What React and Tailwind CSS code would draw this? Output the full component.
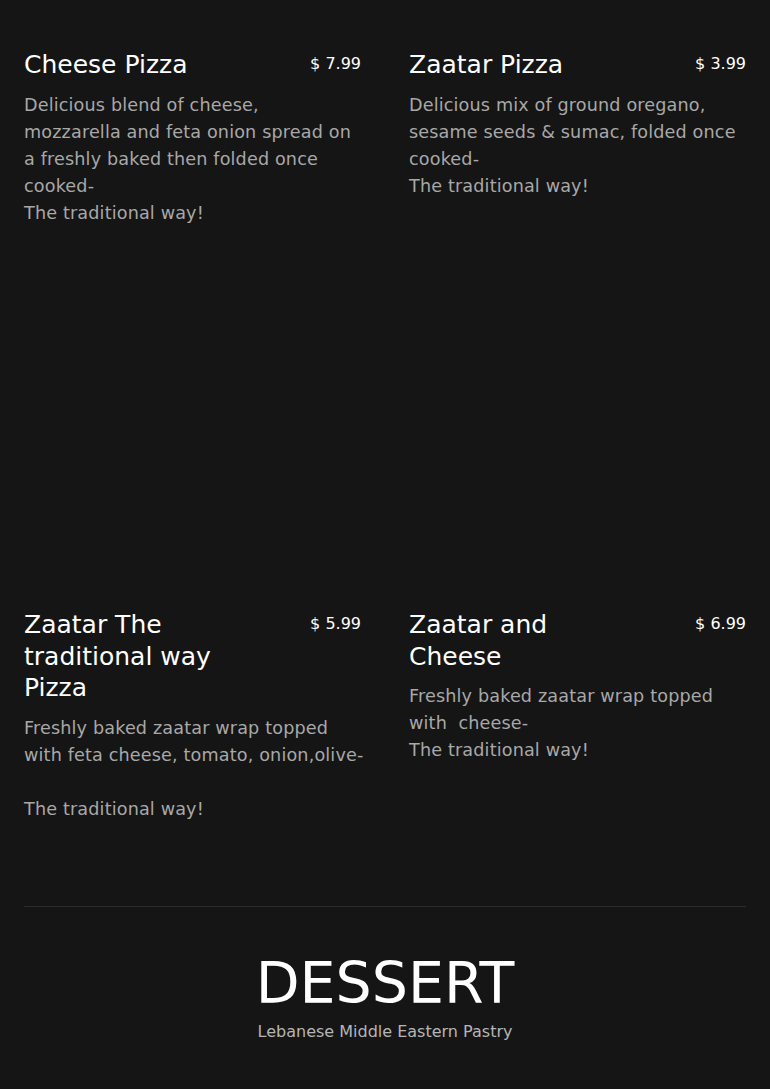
const items = [
  {
    name: "Cheese Pizza",
    price: "$ 7.99",
    desc: ["Delicious blend of cheese,", "mozzarella and feta onion spread on", "a freshly baked then folded once", "cooked-", "The traditional way!"],
  },
  {
    name: "Zaatar Pizza",
    price: "$ 3.99",
    desc: ["Delicious mix of ground oregano,", "sesame seeds & sumac, folded once", "cooked-", "The traditional way!"],
  },
  {
    name: "Zaatar The traditional way Pizza",
    price: "$ 5.99",
    desc: ["Freshly baked zaatar wrap topped", "with feta cheese, tomato, onion,olive-", "", "The traditional way!"],
  },
  {
    name: "Zaatar and Cheese",
    price: "$ 6.99",
    desc: ["Freshly baked zaatar wrap topped", "with  cheese-", "The traditional way!"],
  },
];

function MenuItem({ item, tall }) {
  return (
    <div className={tall ? "min-h-[560px]" : ""}>
      <div className="flex items-start justify-between">
        <h3 className="max-w-[225px] text-[25px] leading-[31.5px] text-white">{item.name}</h3>
        <span className="pt-[1px] text-[16px] leading-[28px] text-white">{item.price}</span>
      </div>
      <p className="mt-[11px] whitespace-pre text-[17.6px] leading-[27px] tracking-[0.15px] text-[#a8a8a8]">
        {item.desc.join("\n")}
      </p>
    </div>
  );
}

export default function App() {
  return (
    <div
      className="min-h-screen bg-[#151515] px-6 pt-[49px]"
      style={{ fontFamily: '"DejaVu Sans", sans-serif' }}
    >
      <div className="grid grid-cols-2 gap-x-12">
        {items.map((item, i) => (
          <MenuItem key={item.name} item={item} tall={i < 2} />
        ))}
      </div>

      <div className="mt-[83px] border-t border-[#2c2c2c] pb-12 pt-[40px] text-center">
        <h2 className="text-[57px] leading-[72px] text-white">DESSERT</h2>
        <p className="mt-[1px] text-[16px] leading-[24px] text-[#b5b5b5]">Lebanese Middle Eastern Pastry</p>
      </div>
    </div>
  );
}
